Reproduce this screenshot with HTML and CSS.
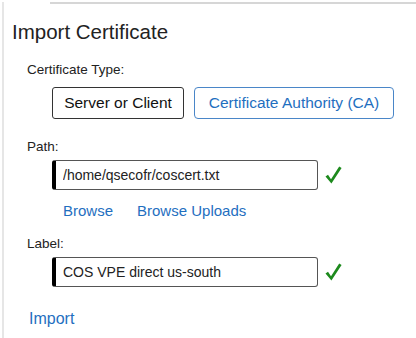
FILE: index.html
```html
<!DOCTYPE html>
<html lang="en">
<head>
  <meta charset="UTF-8" />
  <title>Import Certificate</title>
  <link rel="stylesheet" href="styles.css">
</head>
<body>
  <div class="frame">
    <div class="topline"></div>

    <h1 class="title">Import Certificate</h1>

    <div class="field-label type-label">Certificate Type:</div>
    <div class="type-buttons">
      <button type="button" class="type-btn selected">Server or Client</button>
      <button type="button" class="type-btn">Certificate Authority (CA)</button>
    </div>

    <div class="field-label path-label">Path:</div>
    <div class="input-row">
      <input type="text" class="text-input" value="/home/qsecofr/coscert.txt" />
      <svg class="check" width="17" height="18" viewBox="0 0 17 18">
        <path d="M0.5 10.5 L3 8.8 L6 13.2 L14.2 0.5 L16.6 2 L6.4 17.6 Z" fill="#1d8a1d" />
      </svg>
    </div>
    <div class="links">
      <a href="#" class="link">Browse</a>
      <a href="#" class="link">Browse Uploads</a>
    </div>

    <div class="field-label name-label">Label:</div>
    <div class="input-row">
      <input type="text" class="text-input" value="COS VPE direct us-south" />
      <svg class="check" width="17" height="18" viewBox="0 0 17 18">
        <path d="M0.5 10.5 L3 8.8 L6 13.2 L14.2 0.5 L16.6 2 L6.4 17.6 Z" fill="#1d8a1d" />
      </svg>
    </div>

    <a href="#" class="link import-link">Import</a>
  </div>
</body>
</html>
```

FILE: styles.css
```css
* {
  box-sizing: border-box;
}

body, html {
  margin: 0;
  height: 100%;
  background: #fff;
  font-family: 'Liberation Sans', Arial, sans-serif;
  color: #222;
  overflow: hidden;
}

.frame {
  margin-left: 2px;
  height: 100%;
  border-left: 2px solid #e6e6e6;
}

.topline {
  margin: 2px 0 0 46px;
  height: 2px;
  background: #d6d6d6;
}

.title {
  margin: 16px 0 0 8px;
  font-size: 20.5px;
  line-height: 24px;
  font-weight: 400;
  color: #222;
}

.field-label {
  margin-left: 23px;
  font-size: 13.5px;
  line-height: 16px;
  color: #222;
}

.type-label {
  margin-top: 18px;
}

.type-buttons {
  display: flex;
  gap: 10px;
  margin: 9px 0 0 48px;
}

.type-btn {
  height: 32px;
  padding: 0;
  background: #fff;
  font-family: inherit;
  font-size: 15.5px;
  color: #1f6fbf;
  border: 1px solid #4a86c8;
  border-radius: 4px;
  width: 200px;
  cursor: pointer;
}

.type-btn.selected {
  width: 132px;
  color: #111;
  border-color: #333;
  border-radius: 3px;
}

.path-label {
  margin-top: 20px;
}

.input-row {
  display: flex;
  align-items: center;
  gap: 7px;
  margin: 5px 0 0 48px;
}

.text-input {
  width: 266px;
  height: 30px;
  padding: 0 0 0 7px;
  font-family: inherit;
  font-size: 14px;
  color: #222;
  border: 1px solid #555;
  border-left: 4px solid #000;
  border-radius: 3px;
  outline: none;
}

.check {
  display: block;
}

.links {
  display: flex;
  gap: 24px;
  margin: 12px 0 0 59px;
  font-size: 15px;
  line-height: 18px;
}

.link {
  color: #1f6fbf;
  text-decoration: none;
}

.name-label {
  margin-top: 16px;
}

.import-link {
  display: block;
  margin: 23px 0 0 25px;
  font-size: 16px;
  line-height: 18px;
}
```
